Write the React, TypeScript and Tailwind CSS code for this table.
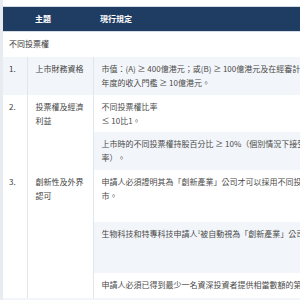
const font = { fontFamily: '"Noto Sans CJK TC", "Noto Sans", sans-serif' };

type SubRow = { lines: string[]; h: string; gray: boolean };

const App: React.FC = () => {
  const numCell = 'align-top pl-[6px] pt-[5px] border-r border-[#e1e6ec] text-[#3d3d3d]';
  const topicCell = 'align-top pl-[8px] pr-[8px] pt-[5px] border-r border-[#e1e6ec] text-[#444]';

  const renderSubs = (subs: SubRow[]) =>
    subs.map((s, i) => (
      <div
        key={i}
        className={`${s.h} pl-[8px] pt-[5px] whitespace-nowrap ${s.gray ? 'bg-[#f2f5f9]' : 'bg-white'}`}
      >
        {s.lines.map((l, j) => (
          <div key={j}>{l}</div>
        ))}
      </div>
    ));

  return (
    <div className="w-[300px] h-[300px] overflow-hidden bg-[#e8ecf1] pl-[3px]" style={font}>
      <div className="bg-white pt-[6px] w-[400px] h-full">
        <table className="border-collapse text-[8px] leading-[14px] table-fixed w-[370px]">
          <colgroup>
            <col className="w-[24px]" />
            <col className="w-[66px]" />
            <col className="w-[280px]" />
          </colgroup>
          <thead>
            <tr className="h-[25px] bg-[#1f3c63] text-white font-bold border-t border-b border-[#d6dce4]">
              <th></th>
              <th className="text-left pl-[8px] font-bold">主題</th>
              <th className="text-left pl-[7px] font-bold">現行規定</th>
            </tr>
          </thead>
          <tbody>
            <tr className="h-[25px] bg-white">
              <td colSpan={3} className="pl-[6px] text-[#333]">不同投票權</td>
            </tr>
            <tr className="h-[38px] bg-[#f2f5f9]">
              <td className={numCell}>1.</td>
              <td className={topicCell}>上市財務資格</td>
              <td className="align-top pl-[8px] pt-[5px] whitespace-nowrap text-[#4a4a4a]">
                <div>市值：(A) ≥ 400億港元；或(B) ≥ 100億港元及在經審計的最近一個財政</div>
                <div>年度的收入門檻 ≥ 10億港元。</div>
              </td>
            </tr>
            <tr className="bg-white">
              <td className={numCell}>2.</td>
              <td className={topicCell}>投票權及經濟利益</td>
              <td className="p-0 align-top text-[#4a4a4a]">
                {renderSubs([
                  { lines: ['不同投票權比率', '≤ 10比1。'], h: 'h-[37px]', gray: false },
                  { lines: ['上市時的不同投票權持股百分比 ≥ 10%（個別情況下接受較低比', '率）。'], h: 'h-[38px]', gray: true },
                ])}
              </td>
            </tr>
            <tr className="bg-white">
              <td className={numCell}>3.</td>
              <td className={topicCell}>創新性及外界認可</td>
              <td className="p-0 align-top text-[#4a4a4a]">
                {renderSubs([
                  { lines: ['申請人必須證明其為「創新產業」公司才可以採用不同投票權架構上', '市。'], h: 'h-[52px]', gray: false },
                  { lines: [], h: 'h-[51px]', gray: true },
                  { lines: ['申請人必須已得到最少一名資深投資者提供相當數額的第三方投資。'], h: 'h-[25px]', gray: false },
                ]).map((el, i) =>
                  i === 1 ? (
                    <div key={i} className="h-[51px] pl-[8px] pt-[5px] whitespace-nowrap bg-[#f2f5f9]">
                      生物科技和特專科技申請人<sup className="text-[5px] leading-none">1</sup>被自動視為「創新產業」公司。
                    </div>
                  ) : (
                    el
                  )
                )}
              </td>
            </tr>
            <tr className="h-[20px] bg-[#f2f5f9]">
              <td colSpan={3}></td>
            </tr>
          </tbody>
        </table>
      </div>
    </div>
  );
};

export default App;
